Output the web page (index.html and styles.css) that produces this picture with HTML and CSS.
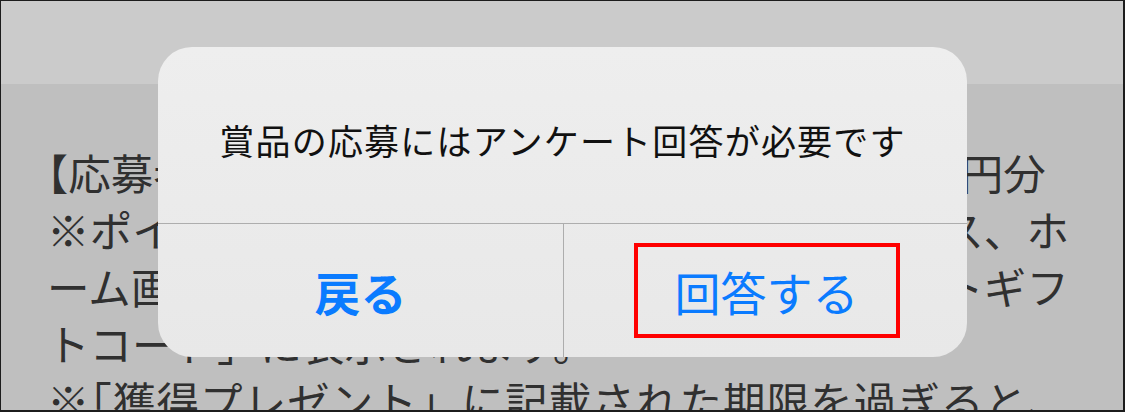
FILE: index.html
```html
<!DOCTYPE html>
<html lang="ja">
<head>
<meta charset="utf-8">
<title>アンケート</title>
<link rel="stylesheet" href="styles.css">
</head>
<body>
<div class="screen">
  <div class="topbar"></div>
  <div class="content">
    <p class="line"><span class="half">【</span>応募者特典】ポイントギフトコード５，０００円分</p>
    <p class="line full">※ポイントは当選後付与され、お知らせボックス、ホ</p>
    <p class="line full">ーム画面上部メニュー内の獲得プレゼントリストギフ</p>
    <p class="line">トコード」に表示されます。</p>
    <p class="line full">※<span class="half">「</span>獲得プレゼント」に記載された期限を過ぎると、</p>
  </div>
  <div class="dialog">
    <div class="dialog-title">賞品の応募にはアンケート回答が必要です</div>
    <div class="dialog-actions">
      <div class="action action-back">戻る</div>
      <div class="action action-answer"><span class="highlight">回答する</span></div>
    </div>
  </div>
</div>
</body>
</html>
```
FILE: styles.css
```css
html, body {
  margin: 0;
  padding: 0;
  background: #bfbfbf;
}
.screen {
  position: relative;
  width: 1125px;
  height: 412px;
  box-sizing: border-box;
  border-style: solid;
  border-color: #1c1c1c;
  border-width: 1px 2px 2px 1px;
  background: #bfbfbf;
  overflow: hidden;
  font-family: "Noto Sans CJK JP", "Noto Sans", sans-serif;
}
.topbar {
  height: 83px;
  background: #cbcbcb;
}
.content {
  padding: 59px 0 0 46px;
  width: 1022px;
  color: #303030;
  font-size: 42.5px;
  line-height: 57px;
}
.line {
  margin: 0;
  white-space: nowrap;
}
.line.full {
  text-align: justify;
  text-align-last: justify;
  white-space: normal;
}
.half {
  font-feature-settings: "halt";
}
.dialog {
  position: absolute;
  left: 157px;
  top: 46px;
  width: 809px;
  height: 310px;
  border-radius: 34px;
  background: linear-gradient(#eeeeee, #e8e8e8);
  display: flex;
  flex-direction: column;
  overflow: hidden;
}
.dialog-title {
  height: 177px;
  box-sizing: border-box;
  padding-top: 8px;
  display: flex;
  align-items: center;
  justify-content: center;
  border-bottom: 1px solid #adadad;
  font-size: 35px;
  letter-spacing: 1.2px;
  color: #111111;
}
.dialog-actions {
  flex: 1;
  display: grid;
  grid-template-columns: 405px 1fr;
}
.action {
  display: flex;
  align-items: center;
  justify-content: center;
  font-size: 46px;
  color: #0a7bff;
}
.action-back {
  font-weight: bold;
}
.action-answer {
  border-left: 1px solid #adadad;
}
.highlight {
  box-sizing: border-box;
  width: 266px;
  height: 95px;
  border: 4px solid #ff0000;
  display: flex;
  align-items: center;
  justify-content: center;
  margin-left: 2px;
}
```
